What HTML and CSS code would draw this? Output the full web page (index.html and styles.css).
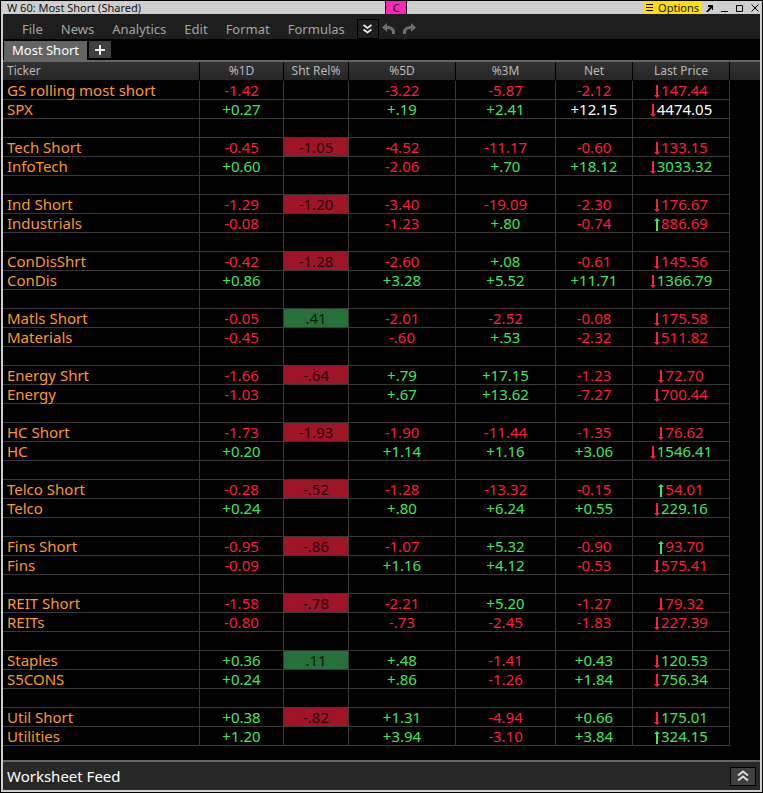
FILE: index.html
```html
<!DOCTYPE html>
<html lang="en">
<head>
<meta charset="utf-8">
<title>Most Short (Shared)</title>
<link rel="stylesheet" href="styles.css">
<script src="script.js" defer></script>
</head>
<body>
<div class="window">
  <header class="titlebar">
    <h1 class="title">W 60: Most Short (Shared)</h1>
    <button class="channel" type="button">C</button>
    <div class="window-tools">
      <button class="options" type="button">
        <svg width="8" height="7" viewBox="0 0 8 7" aria-hidden="true"><path d="M0 .5h7M0 3.5h7M0 6.5h7" stroke="#000"/></svg>
        Options
      </button>
      <button class="tool" type="button" aria-label="Pop out"><svg width="7" height="8" viewBox="0 0 7 8"><path d="M2 1h5v5H6V4L2 8H0l4-5H2z" fill="#000"/></svg></button>
      <button class="tool" type="button" aria-label="Minimize"><svg width="7" height="8" viewBox="0 0 7 8"><path d="M0 7.5h7" stroke="#000"/></svg></button>
      <button class="tool" type="button" aria-label="Maximize"><svg width="7" height="8" viewBox="0 0 7 8"><path d="M.5 1.5h6v6h-6z" fill="none" stroke="#000"/></svg></button>
      <button class="tool" type="button" aria-label="Close"><svg width="8" height="8" viewBox="0 0 8 8"><path d="M.5 .5l7 7M7.500 .5l-7 7" stroke="#000"/></svg></button>
    </div>
  </header>

  <nav class="menubar">
    <button class="menu" type="button">File</button>
    <button class="menu" type="button">News</button>
    <button class="menu" type="button">Analytics</button>
    <button class="menu" type="button">Edit</button>
    <button class="menu" type="button">Format</button>
    <button class="menu" type="button">Formulas</button>
    <button class="more" type="button" aria-label="More"><svg width="9" height="10" viewBox="0 0 9 10"><path d="M.5 1l4 3 4-3M.5 5.500l4 3 4-3" fill="none" stroke="#eee" stroke-width="1.600"/></svg></button>
    <button class="history" type="button" aria-label="Undo"><svg width="14" height="12" viewBox="0 0 14 12"><path d="M0 4.500L5 0v3c5 0 8 2.500 8 5.500V11h-3V9c0-2-2-3-5-3v3z" fill="#6e6e6e"/></svg></button>
    <button class="history" type="button" aria-label="Redo"><svg width="14" height="12" viewBox="0 0 14 12"><path d="M14 4.500L9 0v3C4 3 1 5.500 1 8.500V11h3V9c0-2 2-3 5-3v3z" fill="#6e6e6e"/></svg></button>
  </nav>

  <div class="tabs">
    <button class="tab" type="button">Most Short</button>
    <button class="add" type="button" aria-label="Add sheet"><svg width="10" height="10" viewBox="0 0 10 10"><path d="M5 0v10M0 5h10" stroke="#e8e8e8" stroke-width="2"/></svg></button>
  </div>

  <main class="sheet">
    <table class="grid">
      <colgroup>
        <col class="c-ticker"><col class="c-day"><col class="c-rel"><col class="c-week"><col class="c-quarter"><col class="c-net"><col class="c-price"><col>
      </colgroup>
      <thead>
        <tr><th scope="col">Ticker</th><th scope="col">%1D</th><th scope="col">Sht Rel%</th><th scope="col">%5D</th><th scope="col">%3M</th><th scope="col">Net</th><th scope="col">Last Price</th><td></td></tr>
      </thead>
      <tbody id="quotes"></tbody>
    </table>
  </main>

  <footer class="feed">
    <span>Worksheet Feed</span>
    <button class="expand" type="button" aria-label="Expand feed"><svg width="12" height="12" viewBox="0 0 12 12"><path d="M1 5.500l5-4 5 4M1 10.500l5-4 5 4" fill="none" stroke="#ddd" stroke-width="2"/></svg></button>
  </footer>
</div>
</body>
</html>
```
FILE: styles.css
```css
* { box-sizing: border-box; }

body {
  margin: 0;
  background: #000;
  color: #fff;
  font-family: "Noto Sans", "DejaVu Sans", sans-serif;
  font-size: 15px;
}

button {
  margin: 0;
  padding: 0;
  border: 0;
  background: none;
  color: inherit;
  font: inherit;
}

svg { display: block; }

.window {
  display: flex;
  flex-direction: column;
  min-height: 100vh;
  border: 1px solid #000;
}

.titlebar {
  display: grid;
  grid-template-columns: 52fr 22px 48fr;
  height: 13px;
  background: #cecece;
  color: #111;
  font-size: 11px;
  line-height: 13px;
}

.title {
  margin: 0;
  padding-left: 6px;
  font-size: 11px;
  font-weight: 400;
}

.channel {
  border: solid #000;
  border-width: 0 1px;
  background: #f926b9;
}

.window-tools {
  display: flex;
  justify-content: flex-end;
  align-items: center;
  gap: 8px;
  padding-right: 3px;
}

.options {
  display: flex;
  align-items: center;
  gap: 4px;
  height: 13px;
  margin-right: -4px;
  padding: 0 3px;
  background: #ffe000;
}

.menubar, .tabs, .sheet, .feed {
  border: solid #cecece;
  border-width: 0 2px;
}

.menubar {
  display: flex;
  align-items: center;
  height: 25px;
  padding: 5px 0 0 19px;
  background: #1e1e1e;
  color: #a4a4a4;
  font-size: 13px;
  line-height: 20px;
}

.menu { margin-right: 18px; }

.more {
  display: grid;
  place-items: center;
  width: 22px;
  height: 20px;
  margin: 0 3px 0 -6px;
  border: 1px solid #000;
}

.history { margin-right: 6px; }

.tabs {
  display: flex;
  align-items: flex-end;
  gap: 2px;
  height: 21px;
  padding-left: 1px;
}

.tab {
  height: 19px;
  padding: 0 8px;
  background: #646464;
  font-size: 13px;
  line-height: 17px;
}

.add {
  display: grid;
  place-items: center;
  align-self: flex-start;
  width: 22px;
  height: 17px;
  margin-top: 2px;
  background: #404040;
}

.sheet { flex: 1; }

.grid {
  width: 100%;
  border-top: 2px solid #646464;
  border-spacing: 0;
  table-layout: fixed;
}

.c-ticker { width: 197px; }
.c-day { width: 84px; }
.c-rel { width: 65px; }
.c-week { width: 107px; }
.c-quarter { width: 100px; }
.c-net { width: 77px; }
.c-price { width: 97px; }

.grid th, .grid td {
  height: 19px;
  padding: 0;
  line-height: 18px;
  text-align: center;
  white-space: nowrap;
}

.grid thead th, .grid thead td {
  border-bottom: 1px solid #000;
  background: linear-gradient(#323232, #262626);
  color: #b8b8b8;
  font-size: 12px;
  font-weight: 400;
}

.grid thead th { border-right: 1px solid #000; }

.grid th:first-child {
  padding-left: 4px;
  text-align: left;
}

.grid tbody th {
  color: #ff9a1e;
  font-weight: 400;
}

.grid tbody th, .grid tbody td:not(:last-child) {
  border: solid #383838;
  border-width: 0 1px 1px 0;
}

.grid .down { color: #ff1c38; }
.grid .up { color: #3fe85a; }
.grid .flash { color: #fff; }

.grid .bad {
  background: #a01428;
  color: #25060a;
}

.grid .good {
  background: #26713a;
  color: #06180a;
}

.arrow {
  display: inline-block;
  vertical-align: -2px;
  margin-right: 1px;
}

.feed {
  display: flex;
  justify-content: space-between;
  align-items: center;
  height: 32px;
  padding: 2px 4px 0;
  border-width: 0 2px 2px;
  background: linear-gradient(#646464 2px, #282828 2px);
}

.expand {
  display: grid;
  place-items: center;
  width: 26px;
  height: 19px;
  border: 1px solid #000;
  background: #404040;
}
```
FILE: script.js
```js
// Ticker, %1D, short relative %, %5D, %3M, net, price direction, last price
const groups = [
  [["GS rolling most short", "-1.42", "", "-3.22", "-5.87", "-2.12", "d", "147.44"],
   ["SPX", "+0.27", "", "+.19", "+2.41", "+12.15", "d", "4474.05", "flash"]],
  [["Tech Short", "-0.45", "-1.05", "-4.52", "-11.17", "-0.60", "d", "133.15"],
   ["InfoTech", "+0.60", "", "-2.06", "+.70", "+18.12", "d", "3033.32"]],
  [["Ind Short", "-1.29", "-1.20", "-3.40", "-19.09", "-2.30", "d", "176.67"],
   ["Industrials", "-0.08", "", "-1.23", "+.80", "-0.74", "u", "886.69"]],
  [["ConDisShrt", "-0.42", "-1.28", "-2.60", "+.08", "-0.61", "d", "145.56"],
   ["ConDis", "+0.86", "", "+3.28", "+5.52", "+11.71", "d", "1366.79"]],
  [["Matls Short", "-0.05", ".41", "-2.01", "-2.52", "-0.08", "d", "175.58"],
   ["Materials", "-0.45", "", "-.60", "+.53", "-2.32", "d", "511.82"]],
  [["Energy Shrt", "-1.66", "-.64", "+.79", "+17.15", "-1.23", "d", "72.70"],
   ["Energy", "-1.03", "", "+.67", "+13.62", "-7.27", "d", "700.44"]],
  [["HC Short", "-1.73", "-1.93", "-1.90", "-11.44", "-1.35", "d", "76.62"],
   ["HC", "+0.20", "", "+1.14", "+1.16", "+3.06", "d", "1546.41"]],
  [["Telco Short", "-0.28", "-.52", "-1.28", "-13.32", "-0.15", "u", "54.01"],
   ["Telco", "+0.24", "", "+.80", "+6.24", "+0.55", "d", "229.16"]],
  [["Fins Short", "-0.95", "-.86", "-1.07", "+5.32", "-0.90", "u", "93.70"],
   ["Fins", "-0.09", "", "+1.16", "+4.12", "-0.53", "d", "575.41"]],
  [["REIT Short", "-1.58", "-.78", "-2.21", "+5.20", "-1.27", "d", "79.32"],
   ["REITs", "-0.80", "", "-.73", "-2.45", "-1.83", "d", "227.39"]],
  [["Staples", "+0.36", ".11", "+.48", "-1.41", "+0.43", "d", "120.53"],
   ["S5CONS", "+0.24", "", "+.86", "-1.26", "+1.84", "d", "756.34"]],
  [["Util Short", "+0.38", "-.82", "+1.31", "-4.94", "+0.66", "d", "175.01"],
   ["Utilities", "+1.20", "", "+3.94", "-3.10", "+3.84", "u", "324.15"]]
];

const tone = (v) => (v.startsWith("-") ? "down" : "up");
const cell = (v, cls) => `<td class="${cls}">${v}</td>`;
const arrow = (dir) => {
  const path = dir === "d" ? "M2 0h2v10h2l-3 3-3-3h2z" : "M2 13h2V3h2L3 0 0 3h2z";
  const cls = dir === "d" ? "down" : "up";
  return `<svg class="arrow ${cls}" width="6" height="13" viewBox="0 0 6 13"><path d="${path}" fill="currentColor"/></svg>`;
};

const row = ([name, day, rel, week, quarter, net, dir, price, flash]) => {
  const relClass = rel === "" ? "" : rel.startsWith("-") ? "bad" : "good";
  const netClass = flash || tone(net);
  return `<tr><th scope="row">${name}</th>${cell(day, tone(day))}${cell(rel, relClass)}` +
    `${cell(week, tone(week))}${cell(quarter, tone(quarter))}${cell(net, netClass)}` +
    `${cell(arrow(dir) + price, netClass)}<td></td></tr>`;
};

const spacer = `<tr>${"<td></td>".repeat(8)}</tr>`;
document.getElementById("quotes").innerHTML =
  groups.map((g) => g.map(row).join("")).join(spacer);
```
